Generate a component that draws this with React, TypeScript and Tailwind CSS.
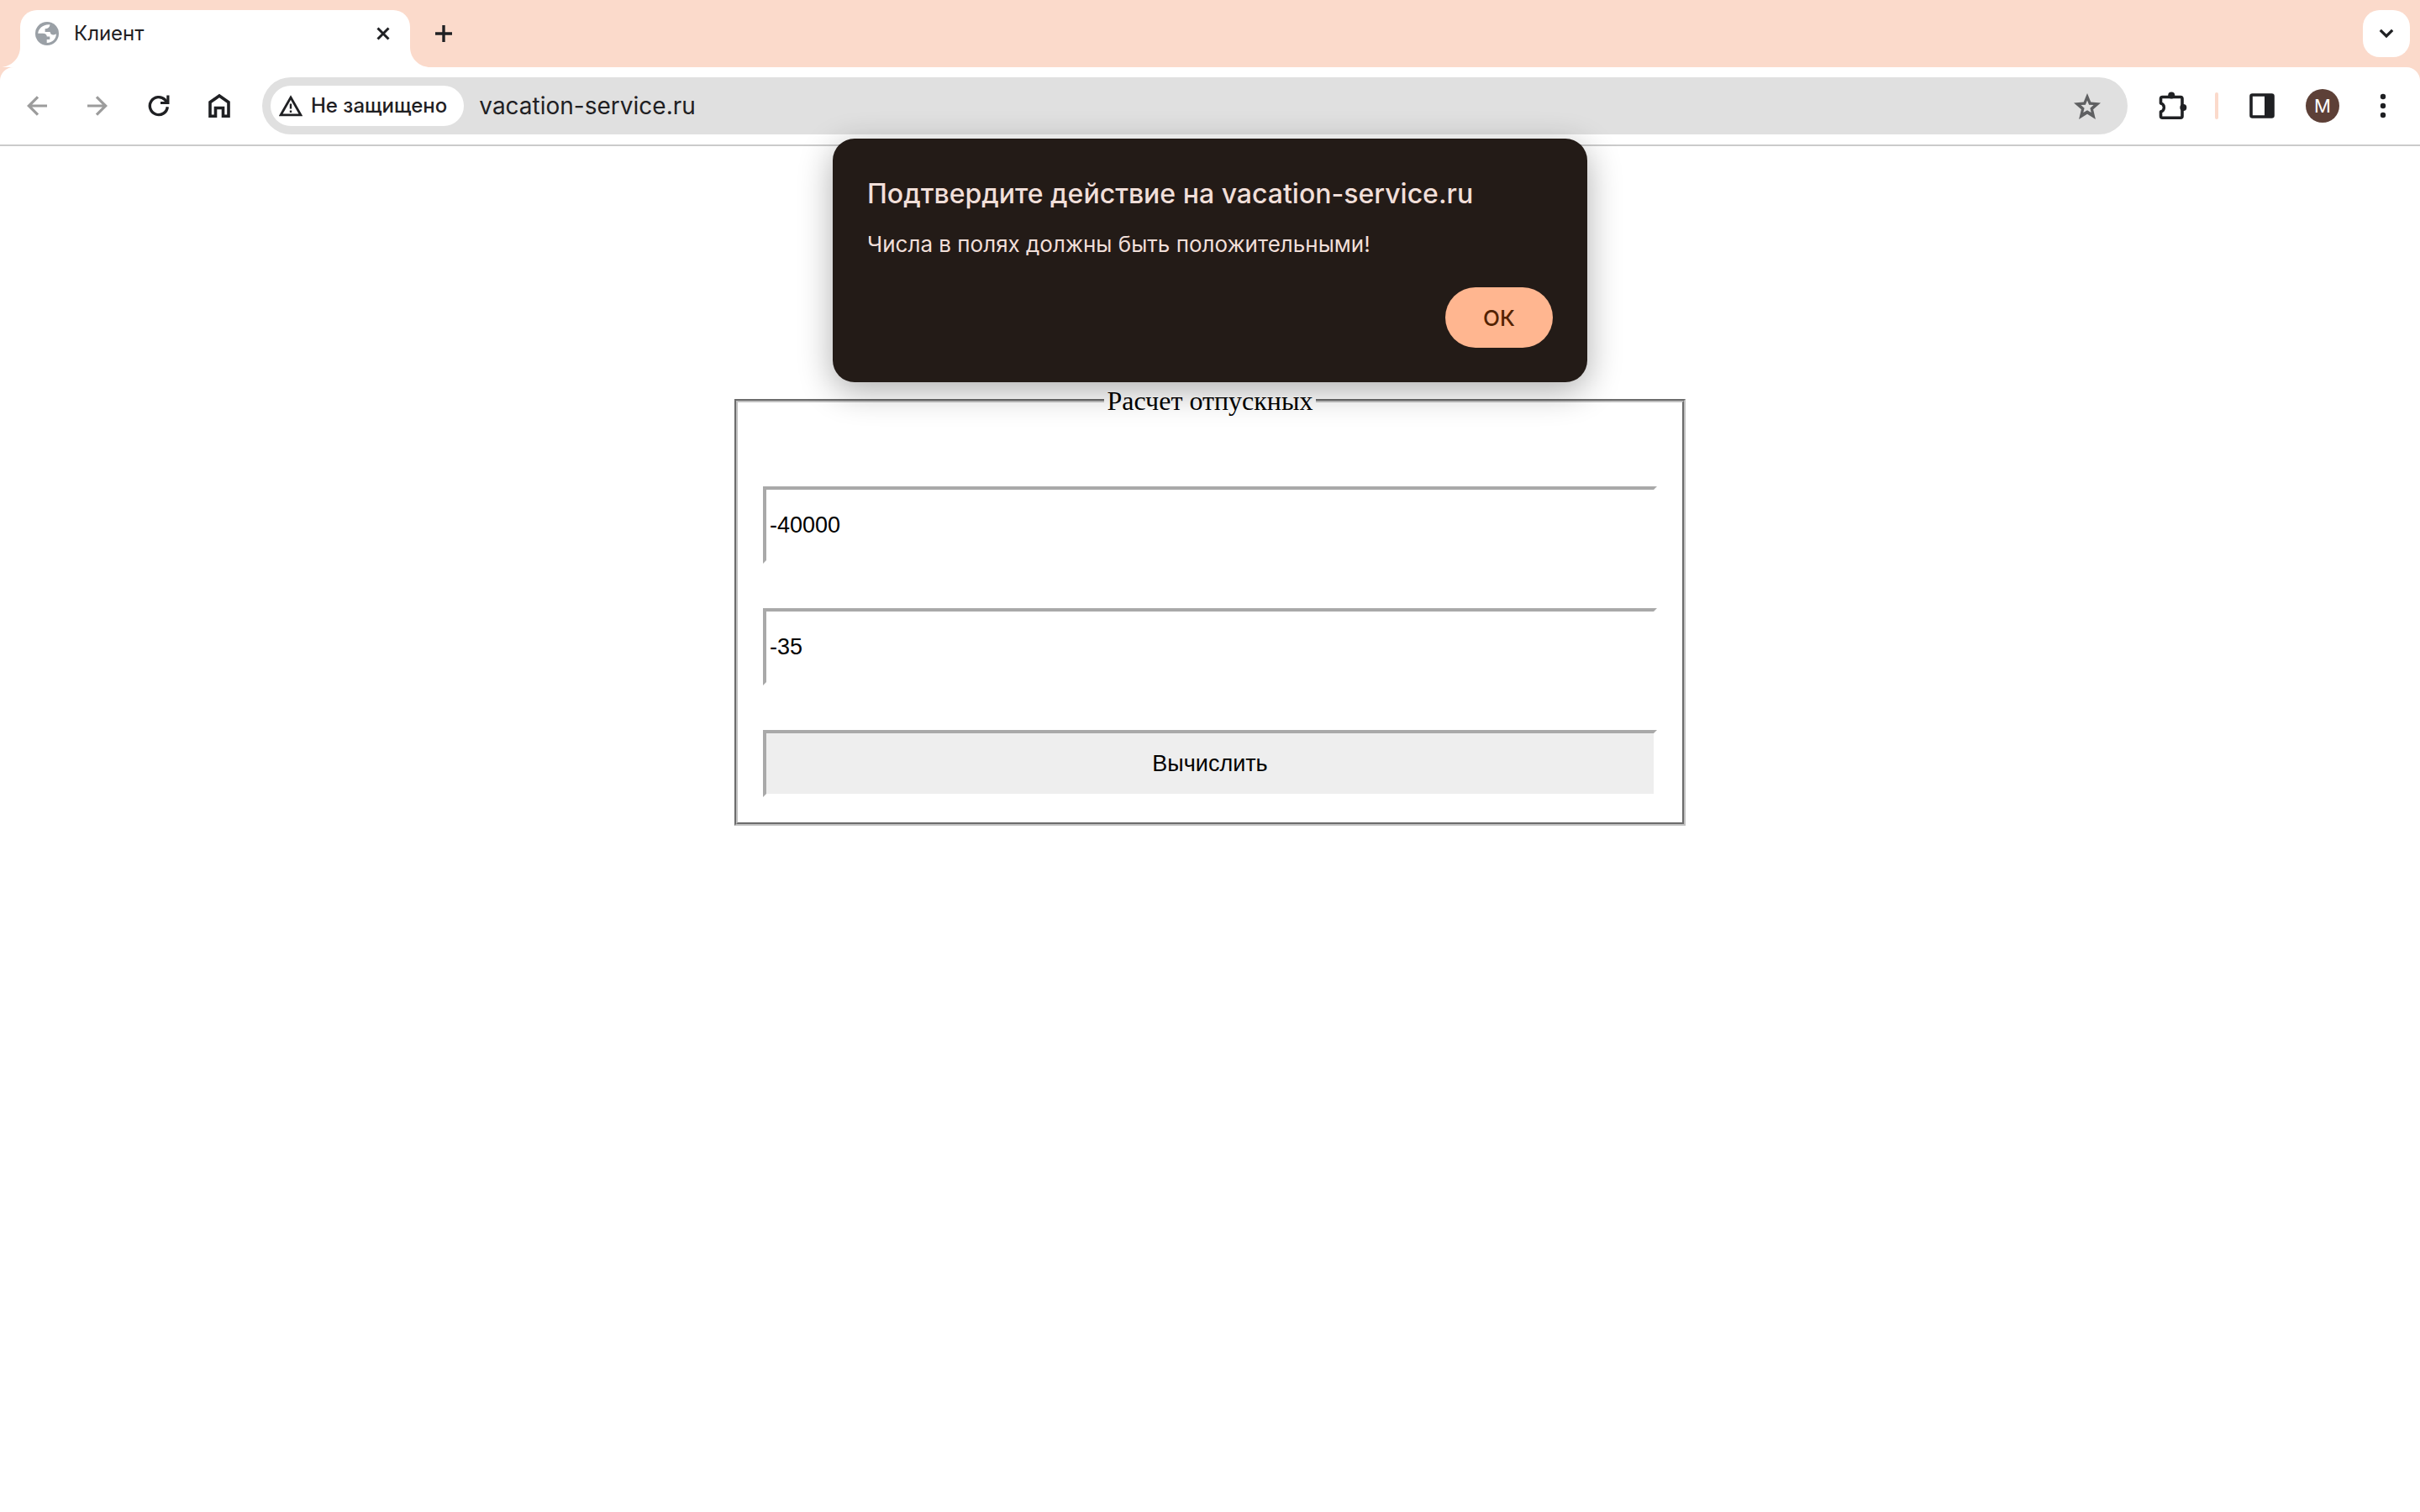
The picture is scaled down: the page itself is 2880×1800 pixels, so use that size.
import { useState } from 'react';

const ink = '#1f2023';

function Globe() {
  return (
    <svg viewBox="0 0 28 28" className="size-7" aria-hidden="true">
      <circle cx="14" cy="14" r="14" fill="#9aa0a6" />
      <path d="M17.500 3.200C9.500 2.500 3.300 8 3.200 13.800H9c3 0 4.800 1.400 4.800 3.700h3.500V21h-3.600v3.900C20.500 25 25 20 24.900 14c-.8 1.100-1.900 1.500-3.400 1.400-2.500 0-3.800-1.400-3.900-3.400h-6V8.200c3.400 0 5.500-1.500 5.900-5z" fill="#fff" />
    </svg>
  );
}

function Close() {
  return (
    <svg viewBox="0 0 16 16" className="size-4" aria-hidden="true">
      <path d="M1.500 1.500l13 13M14.500 1.500l-13 13" stroke={ink} strokeWidth="3" />
    </svg>
  );
}

function Plus() {
  return (
    <svg viewBox="0 0 20 20" className="size-5" aria-hidden="true">
      <path d="M10 0v20M0 10h20" stroke={ink} strokeWidth="3.400" />
    </svg>
  );
}

function Arrow({ flip = false }: { flip?: boolean }) {
  return (
    <svg viewBox="0 0 24 24" className={flip ? 'size-6 rotate-180' : 'size-6'} aria-hidden="true">
      <path d="M24 12H2.500M13 1.300L2.300 12 13 22.700" fill="none" stroke="#9c9c9c" strokeWidth="3.200" />
    </svg>
  );
}

function Reload() {
  return (
    <svg viewBox="0 0 26 26" className="size-[26px]" aria-hidden="true">
      <path d="M23.300 14.200A10.500 10.500 0 1 1 20.400 5.800L23 8.800" fill="none" stroke={ink} strokeWidth="3.400" />
      <path d="M25.500 0.500v10.600H15V8h5.200L22.300 6V0.500z" fill={ink} />
    </svg>
  );
}

function Home() {
  return (
    <svg viewBox="0 0 26 30" className="h-[30px] w-[26px]" aria-hidden="true">
      <path d="M2 27.300V10.800L13 3l11 7.800v16.500h-6.500V17.500h-9v9.800z" fill="none" stroke={ink} strokeWidth="3.600" />
    </svg>
  );
}

function Warning() {
  return (
    <svg viewBox="0 0 28 26" className="h-[26px] w-7" aria-hidden="true">
      <path d="M14 3L25.800 23.800H2.200z" fill="none" stroke={ink} strokeWidth="2.800" />
      <path d="M14 10.500v6M14 18.500v2.600" stroke={ink} strokeWidth="2.400" />
    </svg>
  );
}

function Star() {
  return (
    <svg viewBox="0 0 32 31" className="h-[31px] w-8" aria-hidden="true">
      <path
        fillRule="evenodd"
        d="M16 0l4.300 10.600L32 11.600l-8.900 7.700L25.900 31 16 24.800 6.100 31l2.800-11.700L0 11.600l11.700-1zM16 8.500l-2.100 5.200-5.400.4 4.100 3.600-1.300 5.300L16 20.200l4.700 2.800-1.300-5.300 4.100-3.600-5.400-.4z"
        fill="#5f6062"
      />
    </svg>
  );
}

function Puzzle() {
  return (
    <svg viewBox="0 0 40 40" className="size-10" aria-hidden="true">
      <path d="M6.500 17V11.500a2 2 0 0 1 2-2H30a2 2 0 0 1 2 2V32.300a2 2 0 0 1-2 2H8.500a2 2 0 0 1-2-2V27a5.200 5.200 0 0 0 0-10z" fill="none" stroke={ink} strokeWidth="3.600" strokeLinejoin="round" />
      <path d="M2 18.800h3.200a3.200 3.200 0 0 1 0 6.400H2z" fill="#fff" />
      <circle cx="19.200" cy="7.500" r="4" fill={ink} />
      <circle cx="33.300" cy="22" r="4" fill={ink} />
    </svg>
  );
}

function SidePanel() {
  return (
    <svg viewBox="0 0 30 30" className="size-[30px]" aria-hidden="true">
      <rect x="2" y="2" width="26" height="26" rx="1.500" fill="none" stroke={ink} strokeWidth="3.600" />
      <path d="M18 2h10v26H18z" fill={ink} />
    </svg>
  );
}

function Dots() {
  return (
    <svg viewBox="0 0 8 30" className="h-[30px] w-2" aria-hidden="true">
      <circle cx="4" cy="4" r="3.200" fill={ink} />
      <circle cx="4" cy="15" r="3.200" fill={ink} />
      <circle cx="4" cy="26" r="3.200" fill={ink} />
    </svg>
  );
}

function Chevron() {
  return (
    <svg viewBox="0 0 18 12" className="h-3 w-[18px]" aria-hidden="true">
      <path d="M1.800 1.800L9 9l7.200-7.200" fill="none" stroke={ink} strokeWidth="3.200" />
    </svg>
  );
}

function Flare({ flip = false }: { flip?: boolean }) {
  return (
    <svg viewBox="0 0 24 24" className={flip ? 'size-6 -scale-x-100' : 'size-6'} aria-hidden="true">
      <path d="M0 24C13.300 24 24 13.300 24 0v24z" fill="#fff" />
    </svg>
  );
}

function TabStrip() {
  return (
    <div className="flex h-20 items-center justify-between bg-[#fbdacb] pr-3">
      <div className="flex h-full items-end">
        <Flare />
        <div className="flex h-[68px] w-[464px] items-center rounded-t-[20px] bg-white pr-6 pb-3 pl-[18px]">
          <Globe />
          <span className="ml-[18px] grow text-2xl">Клиент</span>
          <button type="button" aria-label="Закрыть вкладку">
            <Close />
          </button>
        </div>
        <Flare flip />
        <button type="button" aria-label="Новая вкладка" className="mb-[30px] ml-1.5">
          <Plus />
        </button>
      </div>
      <button type="button" aria-label="Поиск вкладок" className="grid size-14 place-items-center rounded-[20px] bg-white">
        <Chevron />
      </button>
    </div>
  );
}

function Toolbar() {
  return (
    <div className="bg-[#fbdacb]">
      <div className="flex h-[94px] items-center rounded-t-2xl border-b-2 border-[#cbcbcb] bg-white pl-8 pr-10">
        <div className="mr-[38px] flex items-center gap-12">
          <button type="button" aria-label="Назад">
            <Arrow />
          </button>
          <button type="button" aria-label="Вперёд">
            <Arrow flip />
          </button>
          <button type="button" aria-label="Обновить">
            <Reload />
          </button>
          <button type="button" aria-label="Главная" className="-ml-0.5">
            <Home />
          </button>
        </div>
        <div className="flex h-[68px] grow items-center rounded-full bg-[#e0e0e0] pr-8 pl-2.5">
          <button type="button" className="flex h-12 items-center gap-2.5 rounded-full bg-white pr-5 pl-2.5 text-2xl font-medium">
            <Warning />
            Не защищено
          </button>
          <input
            type="text"
            aria-label="Адресная строка"
            defaultValue="vacation-service.ru"
            className="ml-[18px] min-w-0 grow bg-transparent text-[28px] outline-none"
          />
          <button type="button" aria-label="Добавить в закладки">
            <Star />
          </button>
        </div>
        <button type="button" aria-label="Расширения" className="ml-[33px]">
          <Puzzle />
        </button>
        <span className="ml-[31px] h-8 w-1 rounded-full bg-[#fbdacb]" />
        <button type="button" aria-label="Боковая панель" className="ml-[37px]">
          <SidePanel />
        </button>
        <button type="button" aria-label="Профиль" className="ml-[37px] grid size-10 place-items-center rounded-full bg-[#5d4037] text-[22px] text-white">
          M
        </button>
        <button type="button" aria-label="Меню" className="ml-12">
          <Dots />
        </button>
      </div>
    </div>
  );
}

function AlertDialog({ onClose }: { onClose: () => void }) {
  return (
    <div
      role="alertdialog"
      aria-labelledby="alert-title"
      aria-describedby="alert-text"
      className="absolute top-[165px] left-1/2 w-[898px] -translate-x-1/2 rounded-[26px] bg-[#231b17] px-[41px] pt-[42px] pb-[41px] text-[#f1dfd9] shadow-[0_10px_40px_rgba(0,0,0,0.32)]"
    >
      <h1 id="alert-title" className="text-[32px] leading-[48px] font-medium">
        Подтвердите действие на vacation-service.ru
      </h1>
      <p id="alert-text" className="mt-4 text-[26px] leading-10">
        Числа в полях должны быть положительными!
      </p>
      <div className="mt-[31px] flex justify-end">
        <button type="button" onClick={onClose} className="h-[72px] w-32 rounded-full bg-[#ffb690] text-[26px] font-medium text-[#532200]">
          ОК
        </button>
      </div>
    </div>
  );
}

const fieldClass =
  'block w-full border-4 border-solid border-t-[#a9a9a9] border-l-[#a9a9a9] border-r-white border-b-white bg-white px-1 text-[27px] text-black outline-none';

function VacationForm() {
  const [salary, setSalary] = useState('-40000');
  const [days, setDays] = useState('-35');
  return (
    <form className="mx-auto w-full max-w-[1132px] pt-[285px]" onSubmit={(e) => e.preventDefault()}>
      <fieldset className="border-4 border-[#c0c0c0] px-[30px] pb-[30px] [border-style:groove]">
        <legend className="mx-auto px-1 font-['Liberation_Serif',serif] text-[32px] leading-9 text-black">
          Расчет отпускных
        </legend>
        <div className="mt-[84px] flex flex-col gap-[53px] font-['Liberation_Sans',sans-serif]">
          <input type="text" aria-label="Зарплата" value={salary} onChange={(e) => setSalary(e.target.value)} className={`${fieldClass} h-[92px]`} />
          <input type="text" aria-label="Дни отпуска" value={days} onChange={(e) => setDays(e.target.value)} className={`${fieldClass} h-[92px]`} />
          <button type="submit" className="h-20 border-4 border-solid border-t-[#a9a9a9] border-r-white border-b-white border-l-[#a9a9a9] bg-[#eeeeee] text-[27px] text-black">
            Вычислить
          </button>
        </div>
      </fieldset>
    </form>
  );
}

export default function App() {
  const [open, setOpen] = useState(true);
  return (
    <div className="relative min-h-screen bg-white font-['Inter',sans-serif] text-[#1f2023]">
      <header>
        <TabStrip />
        <Toolbar />
      </header>
      <main>
        <VacationForm />
      </main>
      {open && <AlertDialog onClose={() => setOpen(false)} />}
    </div>
  );
}
